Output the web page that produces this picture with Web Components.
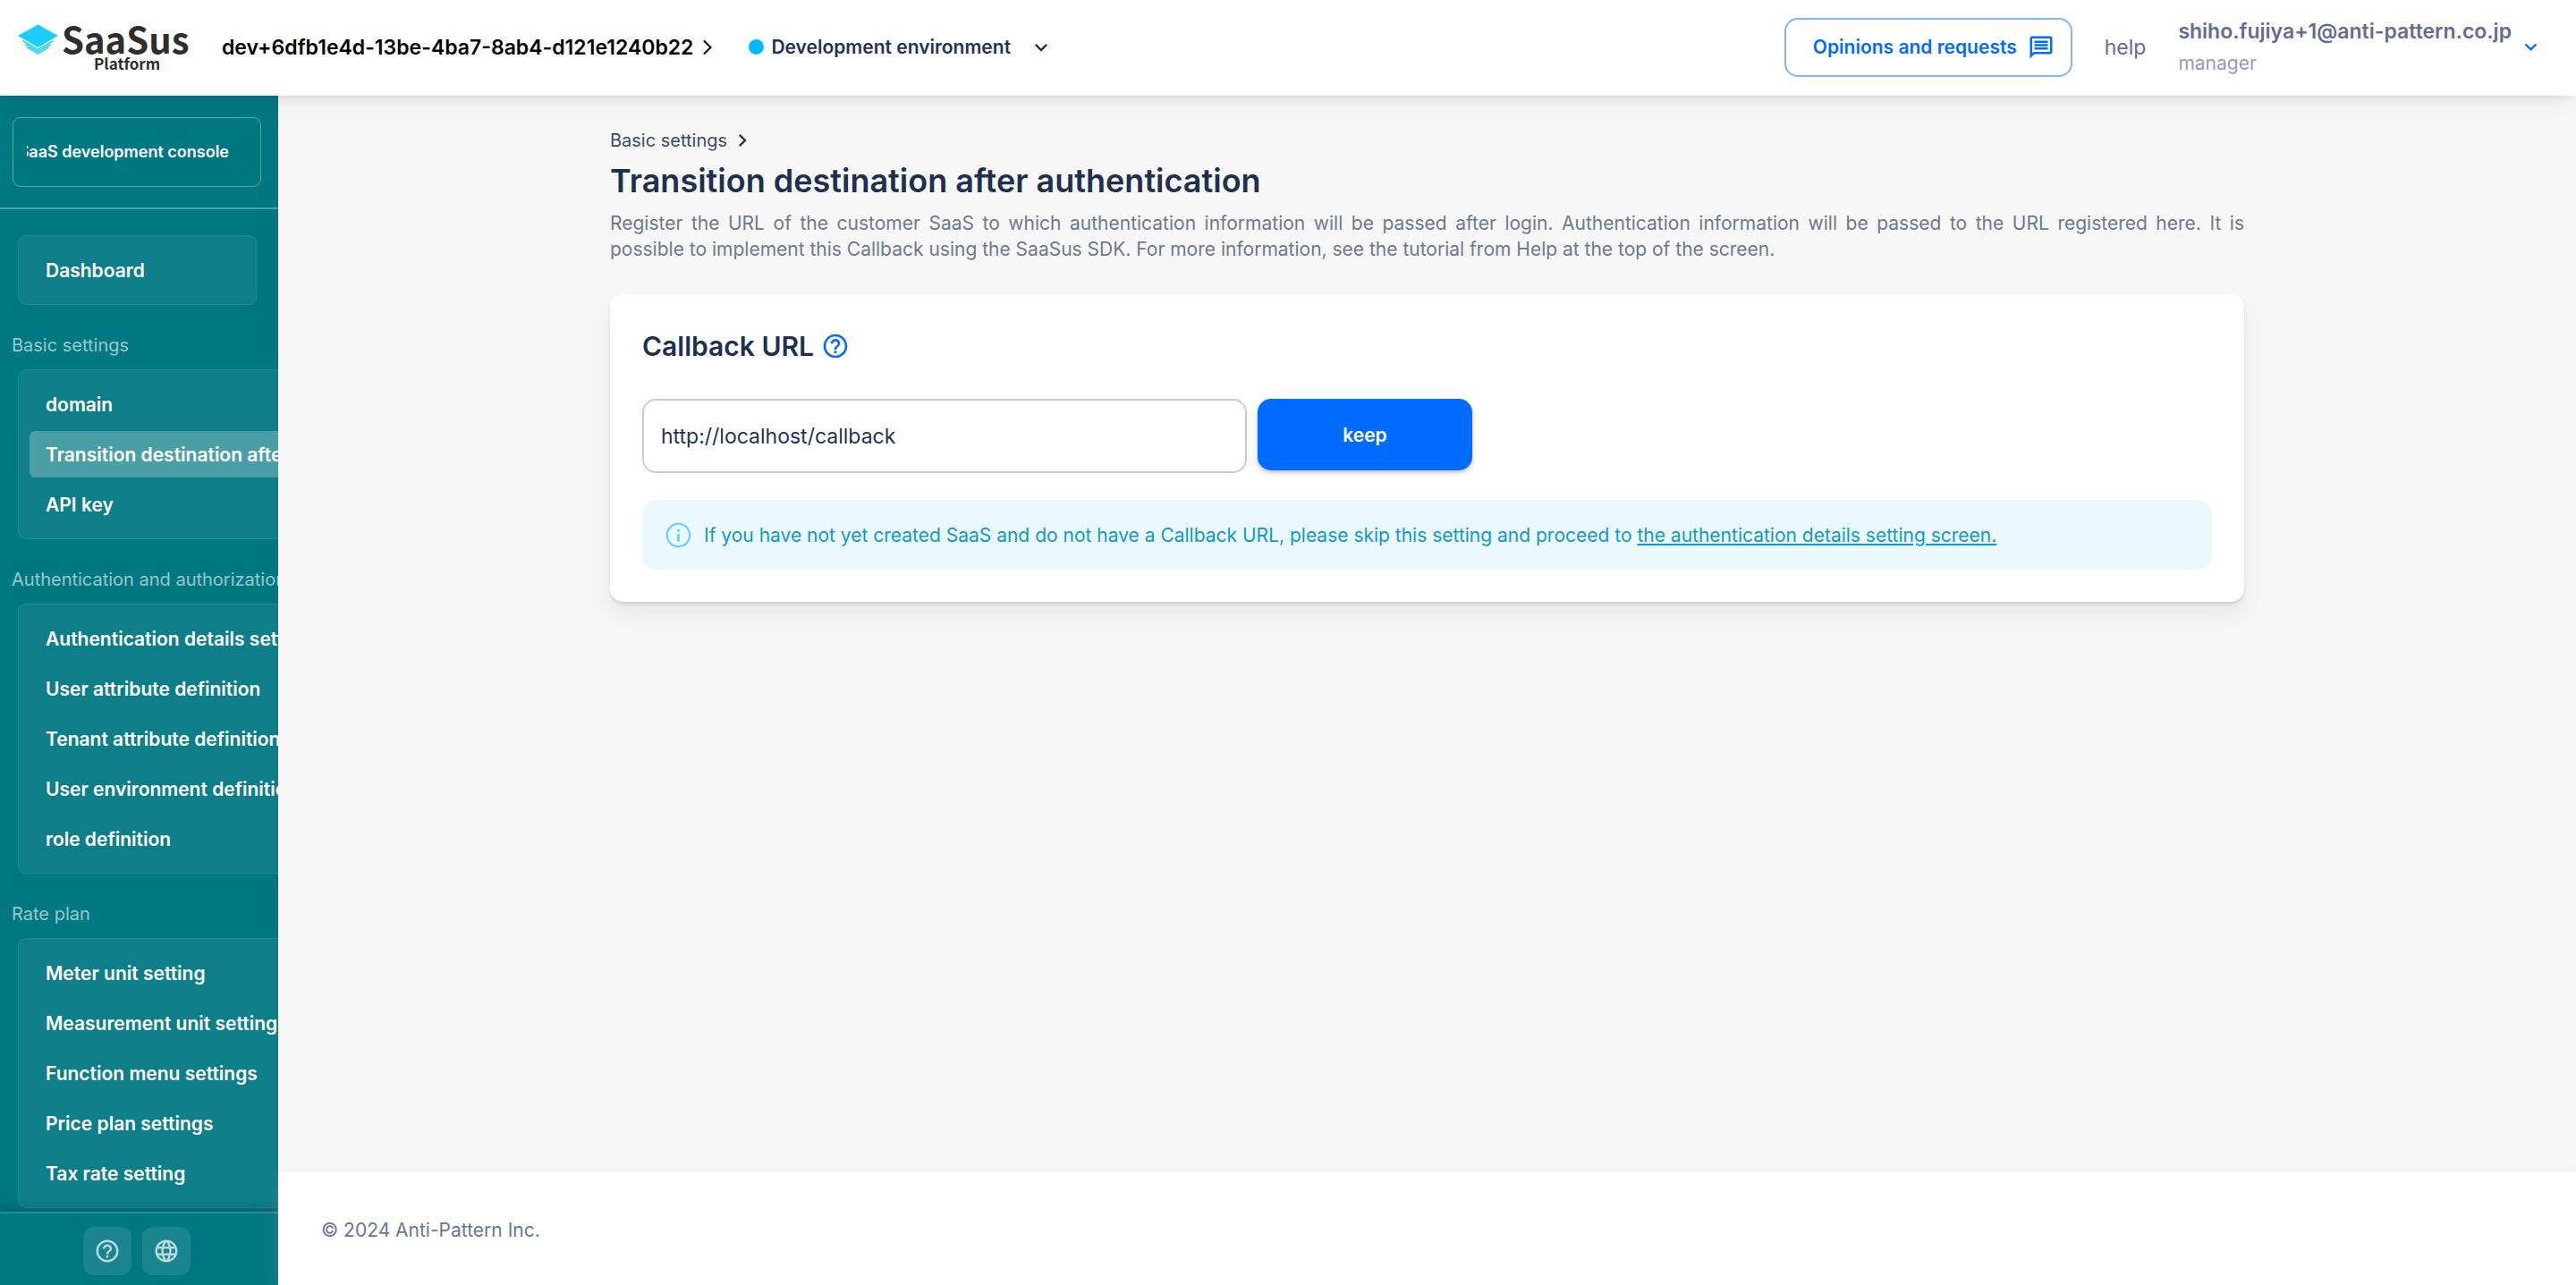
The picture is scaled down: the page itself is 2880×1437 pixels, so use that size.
<!DOCTYPE html>
<html lang="en">
<head>
<meta charset="utf-8">
<title>SaaSus Platform</title>
<style>
  html, body { margin: 0; height: 100%; }
  body {
    font-family: Inter, "Noto Sans", sans-serif;
    font-size: 21px;
    color: #223354;
    background: #f7f7f7;
  }
</style>
</head>
<body>
<saas-app></saas-app>

<script>
const ICONS = {
  help: '<path d="M11 18h2v-2h-2v2zm1-16C6.48 2 2 6.48 2 12s4.48 10 10 10 10-4.48 10-10S17.52 2 12 2zm0 18c-4.41 0-8-3.59-8-8s3.59-8 8-8 8 3.59 8 8-3.59 8-8 8zm0-14c-2.21 0-4 1.79-4 4h2c0-1.1.9-2 2-2s2 .9 2 2c0 2-3 1.75-3 5h2c0-2.25 3-2.5 3-5 0-2.21-1.79-4-4-4z"/>',
  globe: '<path d="M11.99 2C6.47 2 2 6.48 2 12s4.47 10 9.99 10C17.52 22 22 17.52 22 12S17.52 2 11.99 2zm6.93 6h-2.95c-.32-1.25-.78-2.45-1.38-3.56 1.84.63 3.37 1.91 4.33 3.56zM12 4.04c.83 1.2 1.48 2.53 1.91 3.96h-3.82c.43-1.43 1.08-2.76 1.91-3.96zM4.26 14C4.1 13.36 4 12.69 4 12s.1-1.36.26-2h3.38c-.08.66-.14 1.32-.14 2s.06 1.34.14 2H4.26zm.82 2h2.95c.32 1.25.78 2.45 1.38 3.56-1.84-.63-3.37-1.9-4.33-3.56zm2.95-8H5.08c.96-1.66 2.49-2.93 4.33-3.56C8.81 5.55 8.35 6.75 8.03 8zM12 19.96c-.83-1.2-1.48-2.53-1.91-3.96h3.82c-.43 1.43-1.08 2.76-1.91 3.96zM14.34 14H9.66c-.09-.66-.16-1.32-.16-2s.07-1.35.16-2h4.68c.09.65.16 1.32.16 2s-.07 1.34-.16 2zm.25 5.56c.6-1.11 1.06-2.31 1.38-3.56h2.95c-.96 1.65-2.49 2.93-4.33 3.56zM16.36 14c.08-.66.14-1.32.14-2s-.06-1.34-.14-2h3.38c.16.64.26 1.31.26 2s-.1 1.36-.26 2h-3.38z"/>',
  message: '<path d="M4 4h16v12H5.17L4 17.17V4m0-2c-1.1 0-1.99.9-1.99 2L2 22l4-4h14c1.1 0 2-.9 2-2V4c0-1.1-.9-2-2-2H4zm2 10h12v2H6v-2zm0-3h12v2H6V9zm0-3h12v2H6V6z"/>',
  info: '<path d="M11 7h2v2h-2zm0 4h2v6h-2zm1-9C6.48 2 2 6.48 2 12s4.48 10 10 10 10-4.48 10-10S17.52 2 12 2zm0 18.5c-4.7 0-8.500-3.800-8.500-8.500S7.300 3.500 12 3.500s8.500 3.800 8.500 8.500-3.800 8.500-8.500 8.500z"/>',
  down: '<path d="M16.590 8.590 12 13.170 7.410 8.590 6 10l6 6 6-6z"/>',
  right: '<path d="M10 6 8.590 7.410 13.170 12l-4.580 4.590L10 18l6-6z"/>',
  arrow: '<path d="M6.230 20.230 8 22l10-10L8 2 6.230 3.770 14.460 12z"/>'
};

function define(name, markup, setup) {
  const template = document.createElement('template');
  template.innerHTML = markup;
  customElements.define(name, class extends HTMLElement {
    constructor() {
      super();
      this.attachShadow({ mode: 'open' }).append(template.content.cloneNode(true));
    }
    connectedCallback() {
      if (setup) setup(this, this.shadowRoot);
    }
  });
}

define('ui-icon', `
  <style>
    :host { display: inline-flex; flex: none; width: 1em; height: 1em; }
    svg { width: 100%; height: 100%; fill: currentColor; }
  </style>
  <svg viewBox="0 0 24 24" aria-hidden="true"></svg>`,
  (host, root) => { root.querySelector('svg').innerHTML = ICONS[host.getAttribute('name')]; });

define('brand-logo', `
  <style>
    :host { display: block; flex: none; width: 204px; height: 66px; }
    svg { display: block; width: 100%; height: 100%; }
    text { font-family: "Noto Sans CJK JP", sans-serif; font-weight: 700; fill: #2e2e2e; }
  </style>
  <svg viewBox="0 0 204 66" role="img" aria-label="SaaSus Platform">
    <path fill="#1bcdff" d="M0 20 22.500 7.500 45 20 22.500 33z"/>
    <g fill="none" stroke="#1bcdff" stroke-width="1.500">
      <path d="M5.500 25.700 22.500 35.300 39.500 25.700"/>
      <path d="M8 29.300 22.500 37.600 37 29.300"/>
      <path d="M10.500 32.900 22.500 39.900 34.500 32.900"/>
    </g>
    <text x="49" y="40" font-size="40">SaaSus</text>
    <text x="85" y="58" font-size="17">Platform</text>
  </svg>`);

define('top-bar', `
  <style>
    :host {
      display: flex; align-items: center; flex: none; box-sizing: border-box;
      height: 107px; padding: 0 37px 2px 20px; background: #fff;
      position: relative; z-index: 3;
      box-shadow: 0 3px 12px -5px rgba(34,51,84,.2), 0 8px 33px -6px rgba(34,51,84,.1);
    }
    a { color: inherit; text-decoration: none; }
    .org { display: flex; align-items: center; gap: 6px; margin-left: 24px; color: #000; font-size: 23px; font-weight: 600; }
    .org ui-icon { font-size: 20px; }
    .env { display: flex; align-items: center; gap: 8px; margin-left: 36px; }
    .dot { width: 17px; height: 17px; border-radius: 50%; background: #00b8ff; }
    select {
      appearance: none; border: 0; background: none; padding: 0; margin: 0;
      font: 600 21px Inter, sans-serif; color: #223354;
    }
    .env ui-icon { font-size: 28px; margin-left: 12px; }
    .right { display: flex; align-items: center; margin-left: auto; color: #626c94; }
    .ask {
      display: flex; align-items: center; gap: 12px; box-sizing: border-box;
      height: 66px; padding: 0 18px 0 30px; margin-right: 36px;
      border: 2px solid #80b5ff; border-radius: 15px; background: none;
      font: 600 21px Inter, sans-serif; color: #006cff;
    }
    .ask ui-icon { font-size: 30px; }
    .help { font-size: 23px; }
    .user { display: flex; flex-direction: column; margin-left: 36px; line-height: 35px; }
    .mail { font-size: 23px; font-weight: 600; }
    .role { font-size: 21px; color: #929bbd; }
    .menu { display: flex; border: 0; background: none; padding: 0; margin-left: 8px; color: #006cff; font-size: 27px; }
  </style>
  <brand-logo></brand-logo>
  <a class="org" href="#"><span>dev+6dfb1e4d-13be-4ba7-8ab4-d121e1240b22</span><ui-icon name="arrow"></ui-icon></a>
  <div class="env">
    <span class="dot"></span>
    <select aria-label="Environment"><option>Development environment</option></select>
    <ui-icon name="down"></ui-icon>
  </div>
  <div class="right">
    <button class="ask" type="button">Opinions and requests<ui-icon name="message"></ui-icon></button>
    <a class="help" href="#">help</a>
    <div class="user"><span class="mail">shiho.fujiya+1@anti-pattern.co.jp</span><span class="role">manager</span></div>
    <button class="menu" type="button" aria-label="Account menu"><ui-icon name="down"></ui-icon></button>
  </div>`);

define('nav-item', `
  <style>
    :host { display: block; }
    a {
      display: flex; align-items: center; height: 52px; padding: 0 18px; border-radius: 6px;
      color: #fff; font-size: 21px; font-weight: 600; text-decoration: none; white-space: nowrap;
    }
    :host([active]) a { background: rgba(255,255,255,.25); }
  </style>
  <a href="#"><slot></slot></a>`);

define('nav-group', `
  <style>
    :host { display: block; width: max-content; min-width: 100%; }
    h2 {
      margin: 0; height: 72px; box-sizing: border-box; padding: 32px 13px 0;
      font-size: 20px; line-height: 26px; font-weight: 400; color: rgba(255,255,255,.6); white-space: nowrap;
    }
    .box {
      display: flex; flex-direction: column; gap: 4px; margin: 0 24px 0 20px; padding: 12px;
      border: 1px solid rgba(255,255,255,.08); border-radius: 9px; background: rgba(255,255,255,.055);
    }
  </style>
  <h2></h2>
  <div class="box"><slot></slot></div>`,
  (host, root) => {
    const h = root.querySelector('h2');
    if (host.hasAttribute('heading')) h.textContent = host.getAttribute('heading');
    else h.remove();
  });

define('side-bar', `
  <style>
    :host { display: flex; flex-direction: column; flex: none; width: 311px; min-height: 0; overflow: hidden; background: #007882; color: #fff; }
    .console {
      display: flex; justify-content: flex-end; align-items: center; box-sizing: border-box; flex: none;
      height: 78px; margin: 24px 19px 23px 14px; padding: 0 35px 2px 15px;
      border: 1px solid rgba(255,255,255,.35); border-radius: 9px; background: none;
      font: 600 18px Inter, sans-serif; color: #fff;
    }
    .console span { display: flex; justify-content: flex-end; width: 100%; overflow: hidden; white-space: nowrap; }
    nav { flex: 1; min-height: 0; overflow: hidden; padding-top: 29px; border-top: 2px solid rgba(255,255,255,.3); }
    .tools {
      display: flex; justify-content: center; gap: 12px; flex: none; padding: 15px 5px 11px 0;
      border-top: 2px solid rgba(255,255,255,.16); background: #007882;
      box-shadow: 0 -3px 10px rgba(0,30,40,.28);
    }
    .tools button {
      display: flex; align-items: center; justify-content: center; width: 54px; height: 54px; padding: 0;
      border: 0; border-radius: 12px; background: rgba(255,255,255,.1); color: rgba(255,255,255,.7); font-size: 30px;
    }
  </style>
  <button class="console" type="button"><span>SaaS development console</span></button>
  <nav>
    <nav-group><nav-item>Dashboard</nav-item></nav-group>
    <nav-group heading="Basic settings">
      <nav-item>domain</nav-item>
      <nav-item active>Transition destination after authentication</nav-item>
      <nav-item>API key</nav-item>
    </nav-group>
    <nav-group heading="Authentication and authorization">
      <nav-item>Authentication details setting</nav-item>
      <nav-item>User attribute definition</nav-item>
      <nav-item>Tenant attribute definition</nav-item>
      <nav-item>User environment definition</nav-item>
      <nav-item>role definition</nav-item>
    </nav-group>
    <nav-group heading="Rate plan">
      <nav-item>Meter unit setting</nav-item>
      <nav-item>Measurement unit settings</nav-item>
      <nav-item>Function menu settings</nav-item>
      <nav-item>Price plan settings</nav-item>
      <nav-item>Tax rate setting</nav-item>
    </nav-group>
  </nav>
  <div class="tools">
    <button type="button" aria-label="Help"><ui-icon name="help"></ui-icon></button>
    <button type="button" aria-label="Language"><ui-icon name="globe"></ui-icon></button>
  </div>`);

define('page-heading', `
  <style>
    :host { display: block; }
    .crumb { display: flex; align-items: center; gap: 3px; font-size: 20px; line-height: 28px; }
    .crumb a { color: #3b4a68; text-decoration: none; }
    .crumb ui-icon { font-size: 28px; }
    h1 { margin: 8px 0 0; font-size: 36px; line-height: 46px; font-weight: 600; color: #1e2f50; }
    p { margin: 10px 0 0; font-size: 21px; line-height: 29px; color: #6b7a90; text-align: justify; }
  </style>
  <div class="crumb"><a href="#">Basic settings</a><ui-icon name="right"></ui-icon></div>
  <h1>Transition destination after authentication</h1>
  <p><slot></slot></p>`);

define('callback-card', `
  <style>
    :host {
      display: block; margin-top: 36px; padding: 36px; border-radius: 15px; background: #fff;
      box-shadow: 0 14px 24px rgba(159,162,191,.18), 0 3px 3px rgba(159,162,191,.32);
    }
    .title { display: flex; align-items: center; gap: 8px; height: 44px; color: #1e2f50; }
    label { font-size: 30px; font-weight: 600; }
    .title button { display: flex; border: 0; background: none; padding: 0; font-size: 32px; color: #006cff; }
    form { display: flex; align-items: flex-start; gap: 12px; margin-top: 37px; }
    input {
      box-sizing: border-box; width: 676px; height: 83px; padding: 0 19px; margin: 0;
      border: 2px solid #ccc; border-radius: 15px; background: #fff; outline: 0;
      font: 400 23px Inter, sans-serif; color: #223354;
    }
    .save {
      width: 240px; height: 80px; padding: 0; border: 0; border-radius: 15px; background: #006cff;
      font: 600 21px Inter, sans-serif; color: #fff;
      box-shadow: 0 2px 4px rgba(0,0,0,.2), 0 4px 8px rgba(0,0,0,.08);
    }
    .note {
      display: flex; align-items: center; gap: 12px; margin-top: 30px; height: 78px; padding: 0 24px;
      border-radius: 15px; background: #ebf9ff; color: #1099c7; font-size: 21px;
    }
    .note ui-icon { font-size: 33px; color: #5ccfff; }
    .note a { color: inherit; text-decoration: underline; }
  </style>
  <div class="title"><label for="url">Callback URL</label><button type="button" aria-label="About callback URL"><ui-icon name="help"></ui-icon></button></div>
  <form>
    <input id="url" type="text" value="http://localhost/callback">
    <button class="save" type="button">keep</button>
  </form>
  <div class="note"><ui-icon name="info"></ui-icon><span>If you have not yet created SaaS and do not have a Callback URL, please skip this setting and proceed to <a href="#">the authentication details setting screen.</a></span></div>`);

define('page-footer', `
  <style>
    :host {
      display: flex; align-items: center; flex: none; height: 124px; padding: 2px 48px 0; background: #fff;
      color: #6b7890; font-size: 21px; position: relative;
      box-shadow: 0 14px 24px rgba(159,162,191,.18), 0 3px 3px rgba(159,162,191,.32);
    }
  </style>
  <slot></slot>`);

define('saas-app', `
  <style>
    :host { display: flex; flex-direction: column; height: 100vh; overflow: hidden; }
    .body { display: flex; flex: 1; min-height: 0; }
    .content { display: flex; flex-direction: column; flex: 1; min-width: 0; }
    main { flex: 1; box-sizing: border-box; width: 100%; max-width: 1923px; margin: 0 auto; padding: 36px 48px; }
    .keep { white-space: nowrap; }
  </style>
  <top-bar></top-bar>
  <div class="body">
    <side-bar></side-bar>
    <div class="content">
      <main>
        <page-heading>Register the URL of the customer SaaS to which authentication information will be passed after login. Authentication information will be passed to the URL registered here. It is <span class="keep">possible to implement</span> this Callback using the SaaSus SDK. For more information, see the tutorial from Help at the top of the screen.</page-heading>
        <callback-card></callback-card>
      </main>
      <page-footer>© 2024 Anti-Pattern Inc.</page-footer>
    </div>
  </div>`);
</script>
</body>
</html>
